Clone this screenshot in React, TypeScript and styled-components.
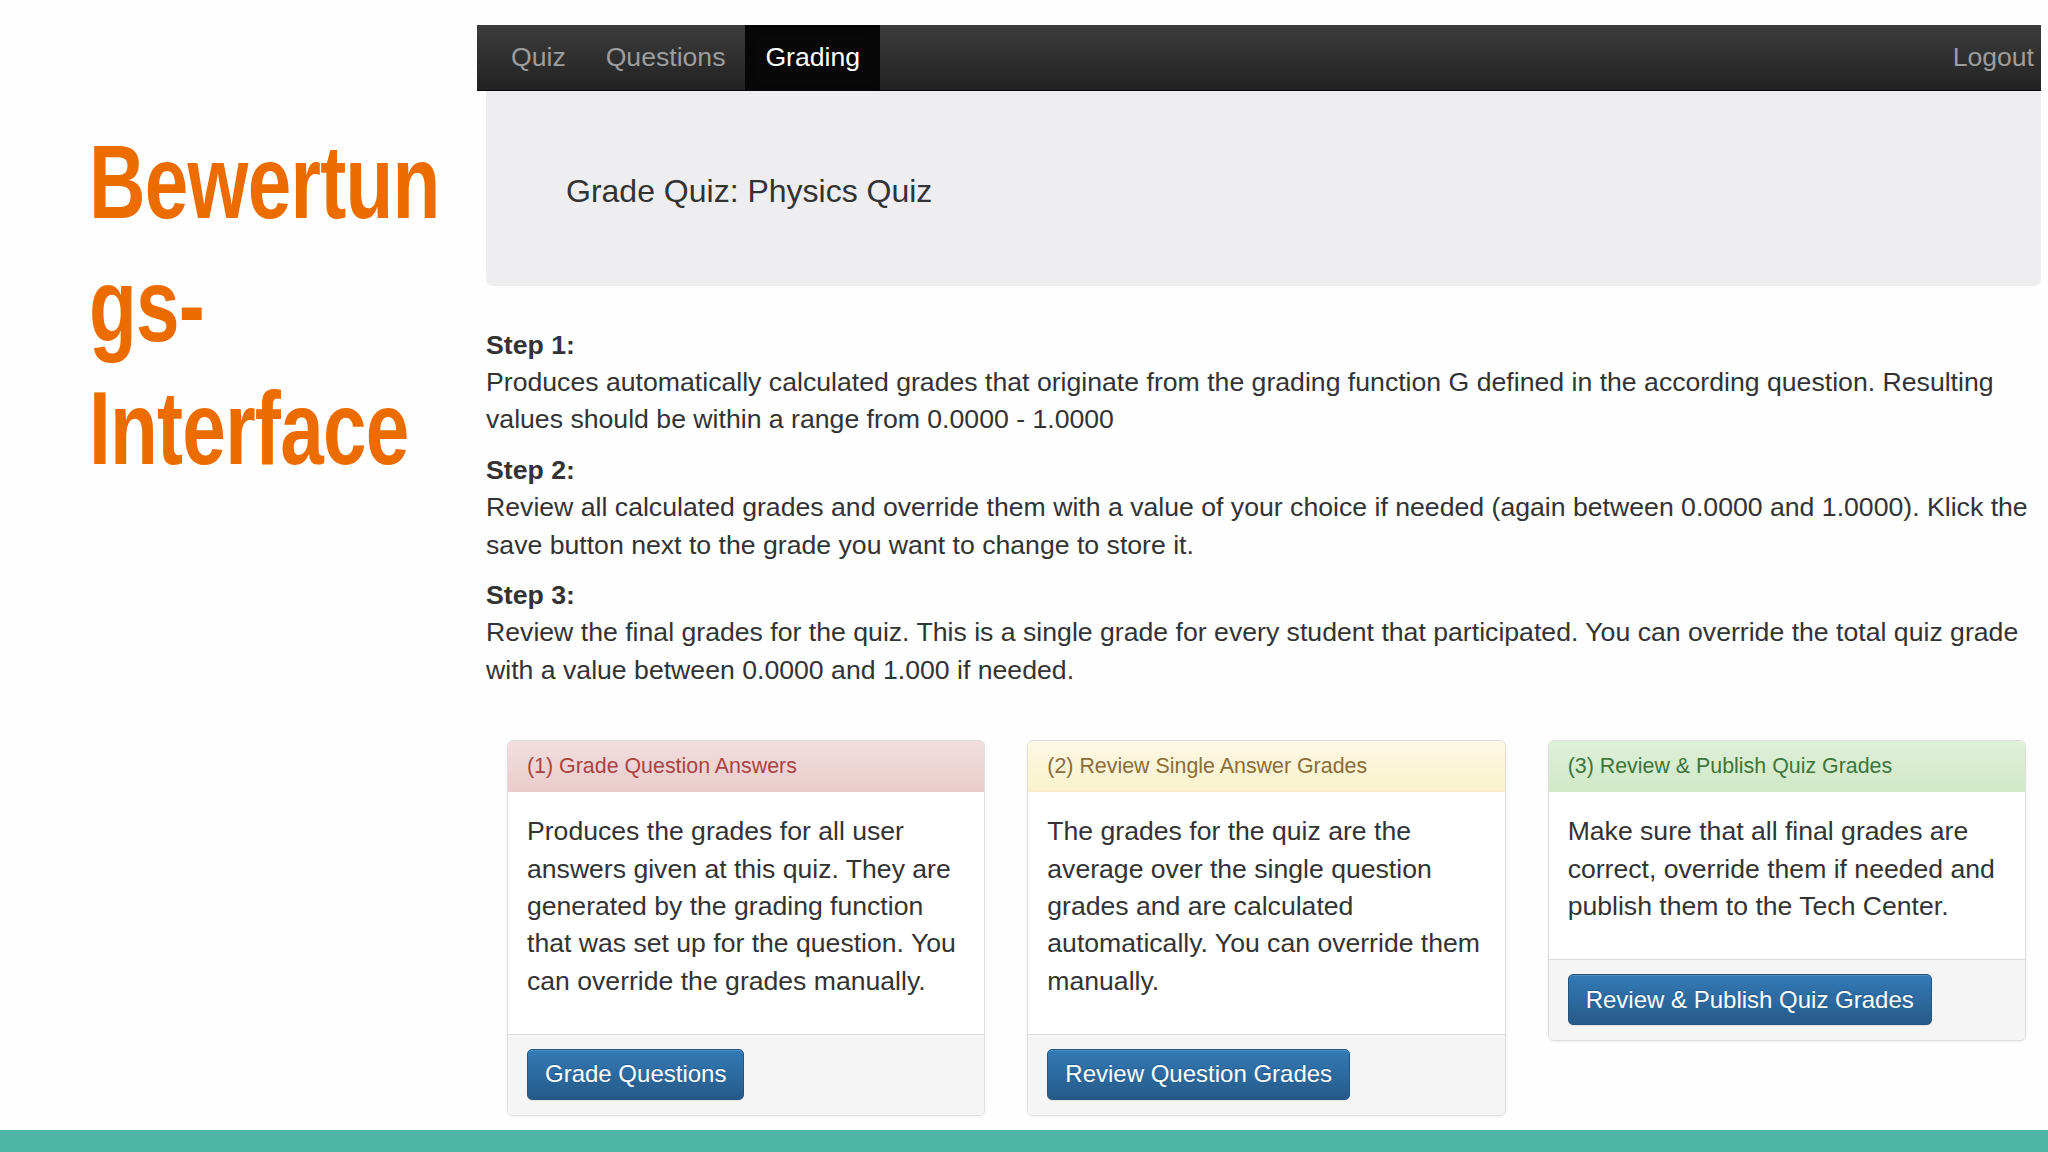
import React from "react";
import styled, { createGlobalStyle } from "styled-components";

const GlobalStyle = createGlobalStyle`
  html, body {
    margin: 0;
    padding: 0;
    background: #fefefe;
  }
  body {
    font-family: "Liberation Sans", Arial, sans-serif;
    color: #333;
  }
  * {
    box-sizing: border-box;
  }
`;

const Slide = styled.div`
  width: 2048px;
  height: 1152px;
  display: flex;
  flex-direction: column;
  overflow: hidden;
  background: #fefefe;
`;

const SlideBody = styled.div`
  flex: 1;
  display: flex;
  min-height: 0;
`;

const TitleColumn = styled.div`
  width: 477px;
  flex-shrink: 0;
  padding: 121px 0 0 89px;
`;

// the slide font is a narrow bold sans; squeeze the wide one to its width
const SlideTitle = styled.h1`
  margin: 0;
  font-family: "Liberation Sans", Arial, sans-serif;
  font-weight: 700;
  font-size: 103px;
  line-height: 123px;
  letter-spacing: -1px;
  color: #ec6c00;

  span {
    display: block;
    white-space: nowrap;
    transform: scaleX(0.76);
    transform-origin: left center;
  }
`;

const AppColumn = styled.div`
  width: 1564px;
  padding-top: 25px;
  display: flex;
  flex-direction: column;
`;

const Navbar = styled.nav`
  height: 66px;
  display: flex;
  align-items: stretch;
  justify-content: space-between;
  padding: 0 7px 0 14px;
  background: linear-gradient(to bottom, #3c3c3c 0%, #222 100%);
  border-bottom: 1px solid #080808;
`;

const NavGroup = styled.div`
  display: flex;
  align-items: stretch;
`;

const NavLink = styled.a<{ $active?: boolean; $edge?: boolean }>`
  display: flex;
  align-items: center;
  padding: 0 ${(p) => (p.$edge ? "0" : "20px")};
  font-size: 26.6px;
  color: ${(p) => (p.$active ? "#fff" : "#9d9d9d")};
  background: ${(p) => (p.$active ? "#080808" : "transparent")};
  box-shadow: ${(p) => (p.$active ? "inset 0 3px 9px rgba(0,0,0,.25)" : "none")};
  text-decoration: none;
  cursor: pointer;
`;

const Content = styled.div`
  margin-left: 9px;
  display: flex;
  flex-direction: column;
`;

const Jumbotron = styled.div`
  height: 195px;
  padding: 6px 0 0 80px;
  display: flex;
  align-items: center;
  background: #eeedef;
  border-radius: 0 0 7px 7px;
`;

const PageTitle = styled.h2`
  margin: 0;
  font-size: 32px;
  font-weight: 400;
  color: #333;
`;

const Steps = styled.div`
  margin: 41px -6px 0 0;
  font-size: 26.65px;
  line-height: 37.2px;
`;

const Step = styled.div`
  margin-bottom: 13.5px;
`;

const StepLabel = styled.div`
  font-weight: 700;
`;

const StepText = styled.div`
  color: #333;
`;

const CardRow = styled.div`
  margin-top: 38px;
  padding: 0 15px 0 21px;
  display: grid;
  grid-template-columns: repeat(3, 1fr);
  gap: 42px;
  align-items: start;
`;

const tones = {
  danger: { from: "#f2dede", to: "#ebcccc", text: "#a94442", border: "#ebccd1" },
  warning: { from: "#fcf8e3", to: "#faf2cc", text: "#8a6d3b", border: "#faebcc" },
  success: { from: "#dff0d8", to: "#d0e9c6", text: "#3c763d", border: "#d6e9c6" },
};

type Tone = keyof typeof tones;

const Card = styled.div`
  background: #fff;
  border: 1px solid #dedede;
  border-radius: 6px;
  box-shadow: 0 1px 3px rgba(0, 0, 0, 0.06);
  overflow: hidden;
`;

const CardHeader = styled.div<{ $tone: Tone }>`
  height: 51px;
  padding: 0 19px;
  display: flex;
  align-items: center;
  font-size: 21.4px;
  color: ${(p) => tones[p.$tone].text};
  background: linear-gradient(to bottom, ${(p) => tones[p.$tone].from} 0%, ${(p) => tones[p.$tone].to} 100%);
  border-bottom: 1px solid ${(p) => tones[p.$tone].border};
`;

const CardBody = styled.div`
  padding: 21px 20px 21px 19px;

  p {
    margin: 0 0 13px;
    font-size: 26.6px;
    line-height: 37.3px;
    color: #333;
  }
`;

const CardFooter = styled.div`
  padding: 14px 19px 15px;
  background: #f5f5f5;
  border-top: 1px solid #dedede;
`;

const PrimaryButton = styled.button`
  height: 51px;
  padding: 0 17px;
  font-family: "Liberation Sans", Arial, sans-serif;
  font-size: 24px;
  color: #fff;
  background: linear-gradient(to bottom, #337ab7 0%, #265a88 100%);
  border: 1px solid #245580;
  border-radius: 5px;
  text-shadow: 0 -1px 0 rgba(0, 0, 0, 0.2);
  box-shadow: inset 0 1px 0 rgba(255, 255, 255, 0.15), 0 1px 1px rgba(0, 0, 0, 0.075);
  cursor: pointer;
`;

const BottomBand = styled.div`
  height: 22px;
  flex-shrink: 0;
  background: #4fb5a6;
`;

const steps = [
  {
    label: "Step 1:",
    text: "Produces automatically calculated grades that originate from the grading function G defined in the according question. Resulting values should be within a range from 0.0000 - 1.0000",
  },
  {
    label: "Step 2:",
    text: "Review all calculated grades and override them with a value of your choice if needed (again between 0.0000 and 1.0000). Klick the save button next to the grade you want to change to store it.",
  },
  {
    label: "Step 3:",
    text: "Review the final grades for the quiz. This is a single grade for every student that participated. You can override the total quiz grade with a value between 0.0000 and 1.000 if needed.",
  },
];

const cards: { tone: Tone; title: string; text: string; action: string }[] = [
  {
    tone: "danger",
    title: "(1) Grade Question Answers",
    text: "Produces the grades for all user answers given at this quiz. They are generated by the grading function that was set up for the question. You can override the grades manually.",
    action: "Grade Questions",
  },
  {
    tone: "warning",
    title: "(2) Review Single Answer Grades",
    text: "The grades for the quiz are the average over the single question grades and are calculated automatically. You can override them manually.",
    action: "Review Question Grades",
  },
  {
    tone: "success",
    title: "(3) Review & Publish Quiz Grades",
    text: "Make sure that all final grades are correct, override them if needed and publish them to the Tech Center.",
    action: "Review & Publish Quiz Grades",
  },
];

export default function App() {
  return (
    <>
      <GlobalStyle />
      <Slide>
        <SlideBody>
          <TitleColumn>
            <SlideTitle>
              <span>Bewertun</span>
              <span>gs-</span>
              <span>Interface</span>
            </SlideTitle>
          </TitleColumn>

          <AppColumn>
            <Navbar>
              <NavGroup>
                <NavLink>Quiz</NavLink>
                <NavLink>Questions</NavLink>
                <NavLink $active>Grading</NavLink>
              </NavGroup>
              <NavGroup>
                <NavLink $edge>Logout</NavLink>
              </NavGroup>
            </Navbar>

            <Content>
              <Jumbotron>
                <PageTitle>Grade Quiz: Physics Quiz</PageTitle>
              </Jumbotron>

              <Steps>
                {steps.map((s) => (
                  <Step key={s.label}>
                    <StepLabel>{s.label}</StepLabel>
                    <StepText>{s.text}</StepText>
                  </Step>
                ))}
              </Steps>

              <CardRow>
                {cards.map((c) => (
                  <Card key={c.title}>
                    <CardHeader $tone={c.tone}>{c.title}</CardHeader>
                    <CardBody>
                      <p>{c.text}</p>
                    </CardBody>
                    <CardFooter>
                      <PrimaryButton>{c.action}</PrimaryButton>
                    </CardFooter>
                  </Card>
                ))}
              </CardRow>
            </Content>
          </AppColumn>
        </SlideBody>
        <BottomBand />
      </Slide>
    </>
  );
}
